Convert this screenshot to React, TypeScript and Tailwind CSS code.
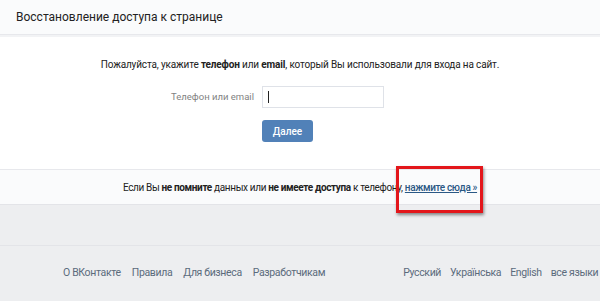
import React from "react";

export default function App() {
  return (
    <div
      className="relative w-full min-h-[301px] overflow-hidden bg-[#edeef0] text-[#222]"
      style={{ fontFamily: "Roboto, 'Open Sans', Arial, sans-serif" }}
    >
      {/* Card */}
      <div className="bg-white border-b border-[#e3e4e8]">
        <div className="h-[35px] flex items-center px-4 bg-[#fafbfc] border-b border-[#e7e8ec] text-[12px]">
          Восстановление доступа к странице
        </div>
        <div className="h-[2px] bg-[#f2f3f5]" />

        <div className="flex flex-col pt-[21px] h-[132px]">
          <p className="text-center text-[10px] leading-[13px] tracking-[-0.15px]">
            Пожалуйста, укажите <b>телефон</b> или <b>email</b>, который Вы использовали для входа на сайт.
          </p>

          <div className="flex mt-[15px]">
            <div className="w-[262px] pr-[8px] text-right text-[9.5px] text-[#828282] leading-[22px]">
              Телефон или email
            </div>
            <div className="flex flex-col items-start">
              <div className="w-[122px] h-[22px] border border-[#dfe2e8] bg-white flex items-center pl-[5px]">
                <span className="w-px h-[12px] bg-[#222]" />
              </div>
              <button
                type="button"
                className="mt-[12px] w-[51px] h-[22px] rounded-[3px] bg-[#5181b8] text-white text-[10px] font-medium"
              >
                Далее
              </button>
            </div>
          </div>
        </div>

        {/* Bottom strip */}
        <div className="h-[35px] flex items-center justify-center bg-[#fafbfc] border-t border-[#e7e8ec] text-[10px] tracking-[-0.35px]">
          <span className="relative">
            Если Вы <b>не помните</b> данных или <b>не имеете доступа</b> к телефону,{" "}
            <a href="#" className="font-medium text-[#2a5885] underline">
              нажмите сюда »
            </a>
            <span className="absolute right-[-6px] top-[-14px] w-[87px] h-[47px] border-[3px] border-[#e3161b] shadow-[1px_2px_3px_rgba(0,0,0,0.45)]" />
          </span>
        </div>
      </div>

      {/* Footer */}
      <div className="mt-[40px] border-t border-[#e3e4e8] h-[54px] flex items-center text-[10.5px] tracking-[-0.35px] text-[#5b6b7c] whitespace-nowrap">
        <div className="flex gap-[11px] pl-[63px]">
          <a href="#">О ВКонтакте</a>
          <a href="#">Правила</a>
          <a href="#">Для бизнеса</a>
          <a href="#">Разработчикам</a>
        </div>
        <div className="flex gap-[9px] ml-[78px]">
          <a href="#">Русский</a>
          <a href="#">Українська</a>
          <a href="#">English</a>
          <a href="#">все языки »</a>
        </div>
      </div>
    </div>
  );
}
